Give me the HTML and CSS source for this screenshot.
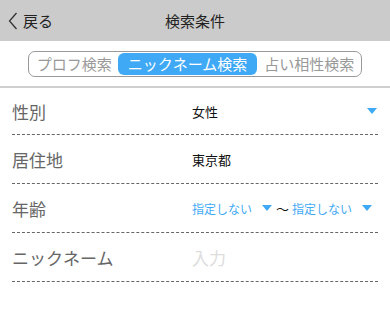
FILE: index.html
```html
<!DOCTYPE html>
<html lang="ja">
<head>
  <meta charset="UTF-8">
  <title>検索条件</title>
  <link rel="stylesheet" href="styles.css">
</head>
<body>
  <header class="topbar">
    <a class="back" href="#">
      <svg class="chev" width="10" height="18" viewBox="0 0 10 18"><path d="M8.5 1 L1.5 9 L8.5 17" fill="none" stroke="#333" stroke-width="1.3"/></svg>
      戻る
    </a>
    <h1 class="title">検索条件</h1>
  </header>

  <div class="tabs-wrap">
    <div class="tabs">
      <span class="tab">プロフ検索</span>
      <span class="tab active">ニックネーム検索</span>
      <span class="tab">占い相性検索</span>
    </div>
  </div>

  <ul class="form">
    <li class="row">
      <span class="label">性別</span>
      <span class="value">女性</span>
      <span class="tri end"></span>
    </li>
    <li class="row">
      <span class="label">居住地</span>
      <span class="value">東京都</span>
    </li>
    <li class="row">
      <span class="label">年齢</span>
      <span class="value range">
        <span class="pick">指定しない</span><span class="tri"></span>
        <span class="tilde">〜</span>
        <span class="pick">指定しない</span><span class="tri"></span>
      </span>
    </li>
    <li class="row">
      <span class="label">ニックネーム</span>
      <span class="value placeholder">入力</span>
    </li>
  </ul>
</body>
</html>
```

FILE: styles.css
```css
body {
  margin: 0;
  background: #fff;
  font-family: "Noto Sans CJK JP", "Noto Sans", sans-serif;
  color: #333;
}
.topbar {
  position: relative;
  height: 41px;
  background: #cbcbcb;
  display: flex;
  align-items: center;
  justify-content: center;
}
.back {
  position: absolute;
  left: 8px;
  top: 0;
  height: 41px;
  display: flex;
  align-items: center;
  gap: 5px;
  color: #222;
  text-decoration: none;
  font-size: 15px;
}
.title {
  margin: 0;
  font-size: 15px;
  font-weight: normal;
  color: #222;
}
.tabs-wrap {
  display: flex;
  justify-content: center;
  padding: 10px 0 9px;
  border-bottom: 2px solid #cfcfcf;
}
.tabs {
  display: flex;
  border: 1px solid #999;
  border-radius: 7px;
  padding: 1px;
}
.tab {
  font-size: 15px;
  line-height: 22px;
  color: #999;
  padding: 0 6px 0 7px;
}
.tab.active {
  background: #3fa9f5;
  color: #fff;
  border-radius: 6px;
  padding: 0 10px;
}
.form {
  list-style: none;
  margin: 0;
  padding: 0 12px;
}
.row {
  display: flex;
  align-items: center;
  height: 48px;
  border-bottom: 1px dashed #666;
}
.row:first-child {
  height: 46px;
}
.label {
  width: 180px;
  font-size: 17px;
  color: #666;
}
.value {
  flex: 1;
  font-size: 13px;
  color: #111;
  white-space: nowrap;
}
.range {
  display: flex;
  align-items: center;
  font-size: 12px;
  color: #3fa9f5;
}
.pick {
  margin-right: 10px;
}
.tilde {
  font-size: 13px;
  color: #111;
  margin: 0 3px 0 4px;
}
.placeholder {
  font-size: 17px;
  color: #ddd;
}
.tri {
  width: 0;
  height: 0;
  border-left: 5px solid transparent;
  border-right: 5px solid transparent;
  border-top: 6px solid #3fa9f5;
}
.tri.end {
  margin-right: 1px;
}
```
